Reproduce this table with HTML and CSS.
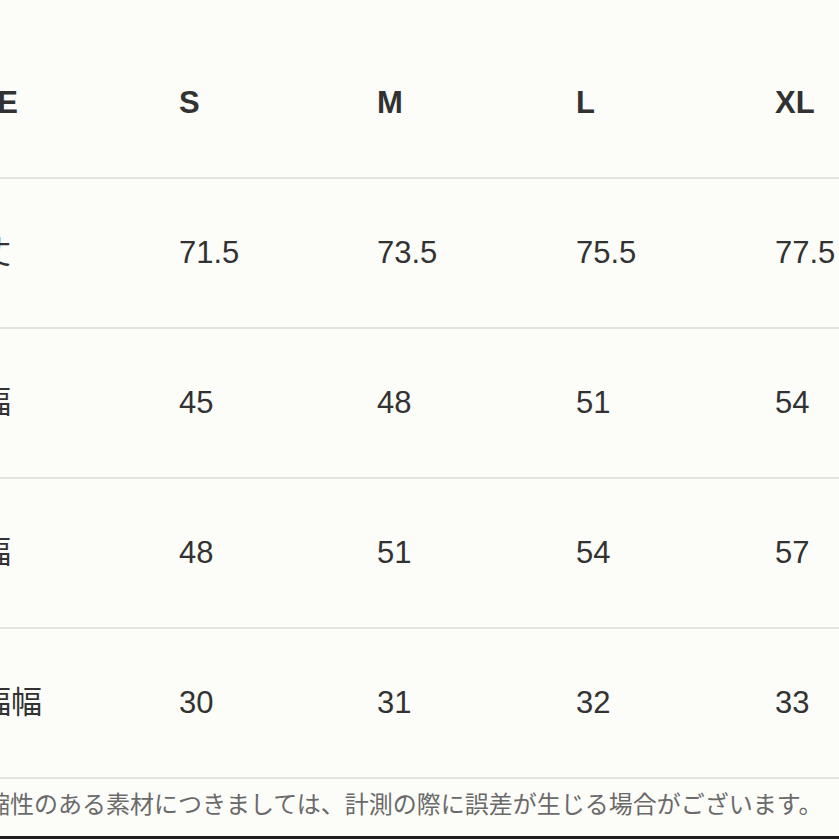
FILE: index.html
```html
<!DOCTYPE html>
<html lang="ja">
<head>
<meta charset="utf-8">
<title>サイズ表</title>
<link rel="stylesheet" href="styles.css">
</head>
<body>
<div class="page">
  <div class="table">
    <div class="row head">
      <div class="cell label">SIZE</div>
      <div class="cell">S</div>
      <div class="cell">M</div>
      <div class="cell">L</div>
      <div class="cell">XL</div>
    </div>
    <div class="row">
      <div class="cell label">着丈</div>
      <div class="cell">71.5</div>
      <div class="cell">73.5</div>
      <div class="cell">75.5</div>
      <div class="cell">77.5</div>
    </div>
    <div class="row">
      <div class="cell label">身幅</div>
      <div class="cell">45</div>
      <div class="cell">48</div>
      <div class="cell">51</div>
      <div class="cell">54</div>
    </div>
    <div class="row">
      <div class="cell label">肩幅</div>
      <div class="cell">48</div>
      <div class="cell">51</div>
      <div class="cell">54</div>
      <div class="cell">57</div>
    </div>
    <div class="row">
      <div class="cell label">袖幅幅</div>
      <div class="cell">30</div>
      <div class="cell">31</div>
      <div class="cell">32</div>
      <div class="cell">33</div>
    </div>
  </div>
  <p class="note">伸縮性のある素材につきましては、計測の際に誤差が生じる場合がございます。</p>
  <div class="bar"></div>
</div>
</body>
</html>
```

FILE: styles.css
```css
html, body {
  margin: 0;
  padding: 0;
  background: #fcfcf8;
}

body {
  overflow: hidden;
}

.page {
  width: 839px;
  height: 839px;
  overflow: hidden;
  display: flex;
  flex-direction: column;
  background: #fcfcf8;
  font-family: "Liberation Sans", "Noto Sans CJK JP", sans-serif;
  color: #323232;
}

.table {
  margin-left: -51px;
  width: 900px;
  padding-top: 29px;
}

.row {
  display: grid;
  grid-template-columns: 230px 198px 199px 199px 1fr;
  height: 148px;
  align-items: center;
  border-bottom: 2px solid #e3e3df;
}

.cell {
  font-size: 31px;
  line-height: 36px;
  white-space: nowrap;
}

.head .cell {
  font-weight: bold;
}

.label {
  font-family: "Liberation Sans", "Noto Sans CJK JP", sans-serif;
}

.note {
  margin: 8px 0 0 -38px;
  font-family: "Noto Sans CJK JP", sans-serif;
  font-size: 24px;
  line-height: 32px;
  color: #6a6a6a;
  white-space: nowrap;
}

.bar {
  margin-top: auto;
  height: 3px;
  background: #1e1e1e;
}
```
